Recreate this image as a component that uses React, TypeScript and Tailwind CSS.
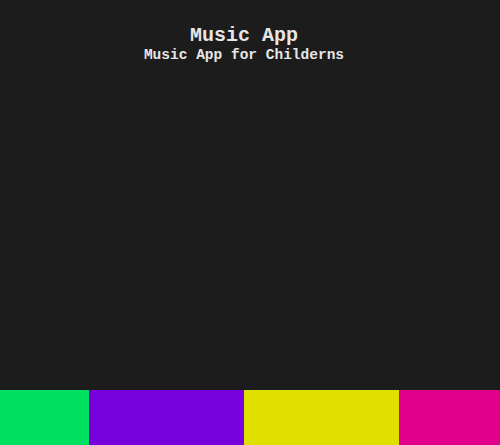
import * as React from "react"

const bars = [
  { label: "green", className: "w-[89px] bg-[#00e060]" },
  { label: "purple", className: "w-[155px] bg-[#7700dd]" },
  { label: "yellow", className: "w-[155px] bg-[#dfe000]" },
  { label: "pink", className: "flex-1 bg-[#e0008c]" },
]

export default function App() {
  return (
    <div className="flex h-[445px] w-[500px] flex-col bg-[#1c1c1c] font-['Liberation_Mono',monospace] text-[#e6e6e6]">
      <header className="flex-1 pt-[25px] pr-3 text-center font-bold">
        <h1 className="text-[20px] leading-[22px]">Music App</h1>
        <p className="text-[14.5px] leading-[17px]">Music App for Childerns</p>
      </header>
      <div className="flex h-[55px]">
        {bars.map((bar) => (
          <div key={bar.label} className={bar.className} />
        ))}
      </div>
    </div>
  )
}
